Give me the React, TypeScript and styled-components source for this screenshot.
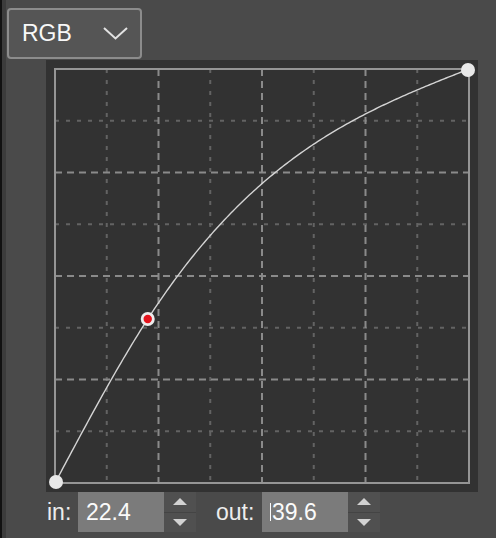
import React from 'react'
import styled, { createGlobalStyle } from 'styled-components'

const GlobalStyle = createGlobalStyle`
   html, body {
      margin: 0;
      padding: 0;
      background: #4a4a4a;
   }
   body {
      font-family: "Liberation Sans", Arial, sans-serif;
   }
`

const Page = styled.div`
   display: flex;
   width: 496px;
   height: 538px;
   background: #4a4a4a;
   overflow: hidden;
`

const EdgeStrip = styled.div`
   width: 4px;
   flex: none;
   background: #3c3c3c;
   border-left: 2px solid #121212;
`

const Content = styled.div`
   display: flex;
   flex-direction: column;
   padding-top: 8px;
`

const Dropdown = styled.div`
   display: flex;
   align-items: center;
   justify-content: space-between;
   box-sizing: border-box;
   width: 135px;
   height: 51px;
   margin-left: 1px;
   padding: 0 12px 0 13px;
   background: #555555;
   border: 2px solid #8c8c8c;
   border-radius: 4px;
   color: #f8f8f8;
   font-size: 23px;
`

const Panel = styled.div`
   width: 432px;
   height: 432px;
   margin: 1px 0 0 40px;
   background: #323232;
`

const ControlRow = styled.div`
   display: flex;
   align-items: center;
   height: 40px;
   margin-left: 41px;
   font-size: 23px;
`

const Label = styled.span<{ $width: number; $gap?: number }>`
   width: ${({ $width }) => $width}px;
   margin-left: ${({ $gap }) => $gap || 0}px;
   color: #ededed;
`

const ValueBox = styled.div`
   display: flex;
   align-items: center;
   box-sizing: border-box;
   width: 86px;
   height: 40px;
   padding-left: 8px;
   background: #7b7b7b;
   color: #fafafa;
`

const Caret = styled.span`
   width: 1px;
   height: 18px;
   margin-right: 1px;
   background: #fafafa;
`

const Spinner = styled.div`
   display: flex;
   flex-direction: column;
   width: 32px;
   height: 40px;
   background: #505050;
`

const SpinHalf = styled.div<{ $top?: boolean }>`
   flex: 1;
   display: flex;
   align-items: center;
   justify-content: center;
   border-bottom: ${({ $top }) => ($top ? '1px solid #444' : 'none')};
`

const SIZE = 414
const OFF = 9
const sel = { x: 0.224, y: 0.396 }

// natural cubic spline through (0,0), sel, (1,1)
function curvePath() {
   const h0 = sel.x
   const h1 = 1 - sel.x
   const m1 = (6 * ((1 - sel.y) / h1 - sel.y / h0)) / (2 * (h0 + h1))
   const f = (x: number) => {
      if (x <= sel.x) {
         return (m1 * x * x * x) / (6 * h0) + (sel.y / h0 - (m1 * h0) / 6) * x
      }
      const a = 1 - x
      const b = x - sel.x
      return (m1 * a * a * a) / (6 * h1) + (sel.y / h1 - (m1 * h1) / 6) * a + (1 / h1) * b
   }
   const pts: string[] = []
   for (let i = 0; i <= 200; i++) {
      const x = i / 200
      const y = f(x)
      pts.push(`${(OFF + x * SIZE).toFixed(2)},${(OFF + (1 - y) * SIZE).toFixed(2)}`)
   }
   return 'M' + pts.join(' L')
}

const CurveChart = () => {
   const step = SIZE / 8
   const lines = [1, 2, 3, 4, 5, 6, 7].map((k) => {
      const p = OFF + k * step
      const major = k % 2 === 0
      const stroke = major ? '#8a8a8a' : '#636363'
      const dash = major ? '7 5' : '4 7'
      return (
         <g key={k}>
            <line x1={p} y1={OFF} x2={p} y2={OFF + SIZE} stroke={stroke} strokeWidth={2} strokeDasharray={dash} />
            <line x1={OFF} y1={p} x2={OFF + SIZE} y2={p} stroke={stroke} strokeWidth={2} strokeDasharray={dash} />
         </g>
      )
   })
   return (
      <svg width={432} height={432} viewBox="0 0 432 432" style={{ display: 'block' }}>
         {lines}
         <rect x={OFF} y={OFF} width={SIZE} height={SIZE} fill="none" stroke="#959595" strokeWidth={2} />
         <path d={curvePath()} fill="none" stroke="#d4d4d4" strokeWidth={1.4} />
         <circle cx={OFF + 1} cy={OFF + SIZE - 1} r={7} fill="#e8e8e8" />
         <circle cx={OFF + SIZE - 1} cy={OFF + 1} r={7} fill="#e8e8e8" />
         <circle cx={OFF + sel.x * SIZE} cy={OFF + (1 - sel.y) * SIZE} r={7} fill="#ececec" />
         <circle cx={OFF + sel.x * SIZE} cy={OFF + (1 - sel.y) * SIZE} r={4.2} fill="#e3131c" />
      </svg>
   )
}

const Chevron = () => (
   <svg width={25} height={13} viewBox="0 0 25 13">
      <polyline points="1,1 12.5,11.5 24,1" fill="none" stroke="#e2e2e2" strokeWidth={2} />
   </svg>
)

const Arrow = ({ up }: { up?: boolean }) => (
   <svg width={14} height={7} viewBox="0 0 14 7">
      <polygon points={up ? '0,7 7,0 14,7' : '0,0 14,0 7,7'} fill="#d2d2d2" />
   </svg>
)

const Stepper = () => (
   <Spinner>
      <SpinHalf $top>
         <Arrow up />
      </SpinHalf>
      <SpinHalf>
         <Arrow />
      </SpinHalf>
   </Spinner>
)

export default function App() {
   return (
      <>
         <GlobalStyle />
         <Page>
            <EdgeStrip />
            <Content>
               <Dropdown>
                  <span>RGB</span>
                  <Chevron />
               </Dropdown>
               <Panel>
                  <CurveChart />
               </Panel>
               <ControlRow>
                  <Label $width={31}>in:</Label>
                  <ValueBox>22.4</ValueBox>
                  <Stepper />
                  <Label $width={46} $gap={20}>out:</Label>
                  <ValueBox>
                     <Caret />
                     39.6
                  </ValueBox>
                  <Stepper />
               </ControlRow>
            </Content>
         </Page>
      </>
   )
}
